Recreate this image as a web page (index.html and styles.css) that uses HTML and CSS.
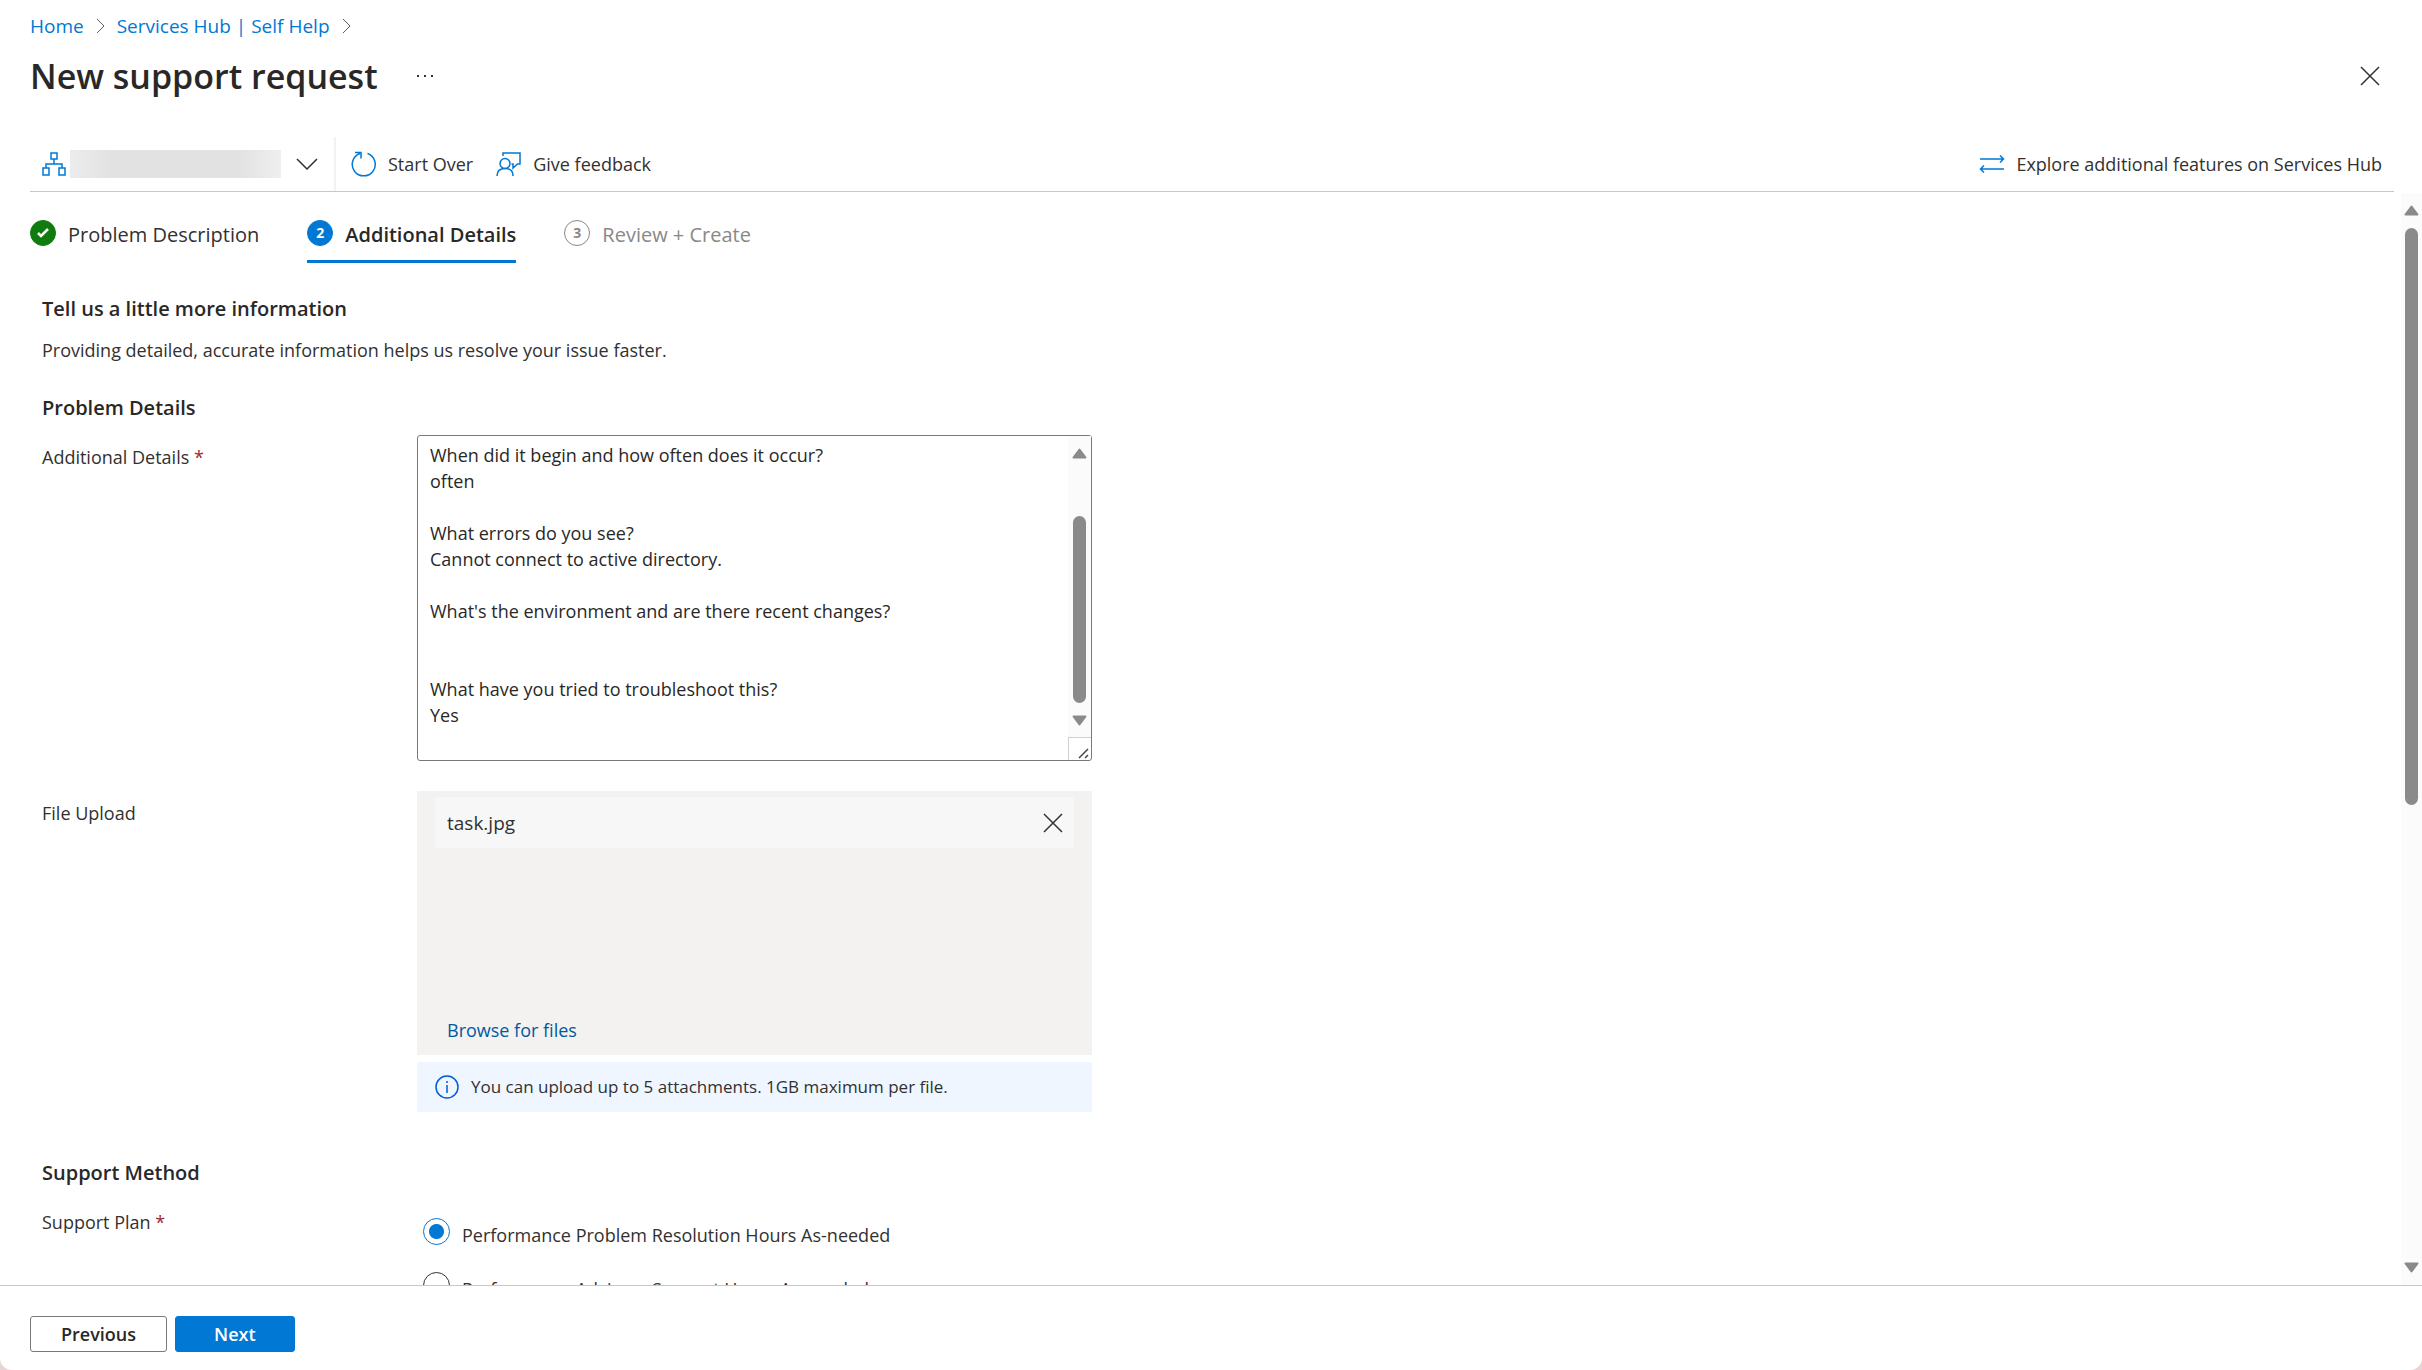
FILE: index.html
```html
<!DOCTYPE html>
<html lang="en">
<head>
  <meta charset="UTF-8">
  <meta name="viewport" content="width=device-width, initial-scale=1.0">
  <title>New support request</title>
  <link rel="stylesheet" href="styles.css">
</head>
<body>
  <div class="window">
    <header class="page-header">
      <nav class="breadcrumb" aria-label="Breadcrumb">
        <a href="#">Home</a>
        <svg class="crumb-sep" viewBox="0 0 9 16"><path d="M1 1l7 7-7 7"/></svg>
        <a href="#">Services Hub | Self Help</a>
        <svg class="crumb-sep" viewBox="0 0 9 16"><path d="M1 1l7 7-7 7"/></svg>
      </nav>
      <div class="title-row">
        <h1>New support request</h1>
        <button class="icon-btn more" aria-label="More">
          <svg width="18" height="4" viewBox="0 0 18 4"><path d="M1 1h2v2H1zM8 1h2v2H8zM15 1h2v2h-2z"/></svg>
        </button>
        <button class="icon-btn close" aria-label="Close">
          <svg class="stroke-dark" width="20" height="20" viewBox="0 0 20 20"><path d="M1 1l18 18M19 1L1 19"/></svg>
        </button>
      </div>
      <div class="toolbar">
        <button class="tool-btn account" aria-label="Switch account">
          <svg class="stroke-blue" width="24" height="24" viewBox="0 0 24 24"><path d="M9 1h6v6H9zM1 16h6v7H1zM17 16h6v7h-6zM12 7v5M4 16v-4h16v4"/></svg>
          <span class="account-name"></span>
          <svg class="stroke-dark" width="22" height="12" viewBox="0 0 22 12"><path d="M1 1l10 10L21 1"/></svg>
        </button>
        <button class="tool-btn">
          <svg class="stroke-blue" width="26" height="26" viewBox="0 0 26 26"><path d="M16.500 2.500A11.500 11.500 0 1 1 9 2.500M4 1.500h6v6"/></svg>
          Start Over
        </button>
        <button class="tool-btn">
          <svg class="stroke-blue" width="26" height="26" viewBox="0 0 26 26"><path d="M7 5V2h17v11h-2.500l-4.500 4v-4h-1.500"/><circle cx="9" cy="12.500" r="5"/><path d="M1 25c0-5 3-7.500 8-7.500s8 2.500 8 7.500"/></svg>
          Give feedback
        </button>
        <button class="tool-btn explore">
          <svg class="stroke-blue" width="26" height="20" viewBox="0 0 26 20"><path d="M1 5h23M21 1.500l3.500 3.500L21 8.500M25 15H2M5 11.500L1.500 15 5 18.500"/></svg>
          Explore additional features on Services Hub
        </button>
      </div>
    </header>

    <main class="content">
      <div class="scroll-area">
        <div class="tabs" role="tablist">
          <button class="tab" role="tab">
            <span class="badge done"><svg width="12" height="10" viewBox="0 0 12 10"><path d="M1 5l3 3 7-7"/></svg></span>
            Problem Description
          </button>
          <button class="tab active" role="tab" aria-selected="true">
            <span class="badge">2</span>
            Additional Details
          </button>
          <button class="tab pending" role="tab">
            <span class="badge">3</span>
            Review + Create
          </button>
        </div>

        <form class="form">
          <h2>Tell us a little more information</h2>
          <p class="intro">Providing detailed, accurate information helps us resolve your issue faster.</p>

          <h2>Problem Details</h2>
          <div class="row">
            <label class="label" for="details">Additional Details <span class="required">*</span></label>
            <div class="details-box">
              <textarea id="details">When did it begin and how often does it occur?
often

What errors do you see?
Cannot connect to active directory.

What's the environment and are there recent changes?


What have you tried to troubleshoot this?
Yes</textarea>
              <div class="textarea-side">
                <div class="scrollbar">
                  <svg class="arrow" viewBox="0 0 15 11"><path d="M7.500 1.500L13.500 9.500h-12z"/></svg>
                  <span class="thumb"></span>
                  <svg class="arrow" viewBox="0 0 15 11"><path d="M7.500 9.500L1.500 1.500h12z"/></svg>
                </div>
                <svg class="grip" viewBox="0 0 22 22"><path d="M10 20l9-9M16 20l3-3"/></svg>
              </div>
            </div>
          </div>

          <div class="row">
            <label class="label" for="file">File Upload</label>
            <div class="upload">
              <div class="drop-zone">
                <div class="file">
                  <span>task.jpg</span>
                  <button type="button" class="icon-btn" aria-label="Remove task.jpg">
                    <svg class="stroke-dark" width="20" height="20" viewBox="0 0 20 20"><path d="M1 1l18 18M19 1L1 19"/></svg>
                  </button>
                </div>
                <label class="browse" for="file">Browse for files</label>
                <input type="file" id="file" hidden>
              </div>
              <div class="notice">
                <svg width="24" height="24" viewBox="0 0 24 24"><circle cx="12" cy="12" r="11"/><path d="M12 10v8M12 6v2"/></svg>
                You can upload up to 5 attachments. 1GB maximum per file.
              </div>
            </div>
          </div>

          <h2 class="support-title">Support Method</h2>
          <div class="row">
            <span class="label" id="plan-label">Support Plan <span class="required">*</span></span>
            <div class="options" role="radiogroup" aria-labelledby="plan-label">
              <label class="option"><input type="radio" name="plan" checked><span>Performance Problem Resolution Hours As-needed</span></label>
              <label class="option"><input type="radio" name="plan"><span>Performance Advisory Support Hours As-needed</span></label>
            </div>
          </div>
        </form>
      </div>
      <div class="scrollbar page-scrollbar">
        <svg class="arrow" viewBox="0 0 15 11"><path d="M7.500 1.500L13.500 9.500h-12z"/></svg>
        <span class="thumb"></span>
        <svg class="arrow" viewBox="0 0 15 11"><path d="M7.500 9.500L1.500 1.500h12z"/></svg>
      </div>
    </main>

    <footer class="footer">
      <button class="btn">Previous</button>
      <button class="btn primary">Next</button>
    </footer>
  </div>
</body>
</html>
```

FILE: styles.css
```css
:root {
  --blue: #0078d4;
  --text: #323130;
  --dark: #292827;
  --line: #c8c8c8;
  --thumb: #8a8a8a;
}
* { box-sizing: border-box; margin: 0; padding: 0; }
html, body { height: 100%; }
body {
  background: #e6d4d6;
  color: var(--text);
  font-family: 'Segoe UI', 'Open Sans', 'Noto Sans', sans-serif;
  font-size: 18px;
  line-height: 26px;
}
button, textarea, input { font: inherit; color: inherit; }
button { background: none; border: none; cursor: pointer; }
svg { flex: none; fill: none; }
a { color: var(--blue); text-decoration: none; }
.stroke-blue { stroke: var(--blue); stroke-width: 1.5; }
.stroke-dark { stroke: var(--text); stroke-width: 1.5; }

.window {
  display: flex;
  flex-direction: column;
  height: 100vh;
  background: #fff;
  border-radius: 0 0 12px 12px;
  overflow: hidden;
}

/* header */
.page-header { padding: 13px 28px 0 30px; }
.breadcrumb { display: flex; align-items: center; gap: 12px; font-size: 19px; }
.crumb-sep { width: 9px; height: 16px; stroke: #605e5c; }
.title-row {
  display: flex;
  align-items: center;
  height: 48px;
  margin: 13px 0 37px;
}
h1 { font-size: 34px; font-weight: 600; line-height: 48px; color: var(--dark); }
.icon-btn { display: flex; align-items: center; justify-content: center; }
.more { margin-left: 38px; }
.more svg { fill: var(--text); }
.close { margin-left: auto; margin-right: 14px; }

.toolbar {
  display: flex;
  align-items: center;
  gap: 23px;
  height: 55px;
  border-bottom: 1px solid var(--line);
}
.tool-btn { display: flex; align-items: center; gap: 11px; }
.account {
  gap: 4px;
  height: 54px;
  padding: 0 16px 0 12px;
  border-right: 2px solid #f3f2f1;
  margin-right: -8px;
}
.account-name {
  width: 211px;
  height: 28px;
  margin-right: 11px;
  background: linear-gradient(90deg, #ececec, #e2e2e2 20%, #e2e2e2 80%, #efefef);
}
.explore { margin-left: auto; padding-right: 12px; }

/* content */
.content { flex: 1; display: flex; min-height: 0; padding-top: 1px; }
.scroll-area { flex: 1; overflow: hidden; }
.tabs { display: flex; gap: 48px; padding: 16px 30px 0; }
.tab {
  display: flex;
  align-items: center;
  gap: 12px;
  height: 54px;
  border-bottom: 3px solid transparent;
  font-size: 20px;
}
.tab.active { border-color: var(--blue); font-weight: 600; color: var(--dark); }
.tab.pending { color: #8a8886; }
.badge {
  display: flex;
  align-items: center;
  justify-content: center;
  width: 26px;
  height: 26px;
  margin-bottom: 4px;
  border: 1px solid var(--blue);
  border-radius: 50%;
  background: var(--blue);
  color: #fff;
  font-size: 14px;
  font-weight: 700;
  line-height: 24px;
}
.badge.done { background: #107c10; border-color: #107c10; }
.badge svg { stroke: #fff; stroke-width: 2.5; }
.pending .badge { background: #fff; color: #8a8886; border-color: #8a8886; }

.form { max-width: 1140px; padding: 33px 42px 0; }
h2 { font-size: 20px; font-weight: 600; line-height: 26px; color: var(--dark); }
.intro { margin: 15px 0 32px; }
.row {
  display: grid;
  grid-template-columns: 375px minmax(0, 675px);
  margin: 14px 0 30px;
}
.label { padding-top: 9px; }
.required { color: #a4262c; }

.details-box {
  display: flex;
  height: 326px;
  border: 1px solid #7a7979;
  border-radius: 3px;
}
textarea {
  flex: 1;
  padding: 6px 12px;
  border: none;
  outline: none;
  resize: none;
  overflow: hidden;
  background: transparent;
  color: var(--dark);
}
.textarea-side { display: flex; flex-direction: column; width: 23px; }
.textarea-side .scrollbar { flex: 1; padding: 12px 0 11px; }
.grip {
  width: 23px;
  height: 23px;
  border-top: 1px solid #d2d0ce;
  border-left: 1px solid #d2d0ce;
  stroke: #484644;
  stroke-width: 1.5;
}

.scrollbar {
  display: flex;
  flex-direction: column;
  align-items: center;
  justify-content: space-between;
  background: #fbfbfb;
}
.arrow {
  width: 15px;
  height: 11px;
  fill: var(--thumb);
  stroke: var(--thumb);
  stroke-width: 2;
  stroke-linejoin: round;
}
.thumb { width: 13px; border-radius: 7px; background: var(--thumb); }
.textarea-side .thumb { height: 187px; margin-top: 44px; }
.page-scrollbar { width: 21px; padding: 12px 0; justify-content: flex-start; }
.page-scrollbar .thumb { height: 54%; margin: 12px 0 auto; }

.drop-zone {
  display: flex;
  flex-direction: column;
  height: 264px;
  padding: 6px 18px 12px;
  background: #f3f2f1;
}
.file {
  display: flex;
  align-items: center;
  justify-content: space-between;
  height: 51px;
  padding: 0 11px 0 12px;
  border-radius: 3px;
  background: #f7f7f7;
  font-size: 19px;
}
.browse { margin: auto auto 0 12px; color: #005a9e; cursor: pointer; }
.notice {
  display: flex;
  align-items: center;
  gap: 12px;
  height: 50px;
  margin-top: 7px;
  padding: 0 18px;
  background: #eff6ff;
  font-size: 17px;
}
.notice svg { stroke: #015cda; stroke-width: 1.5; }

.support-title { margin-top: 48px; }
.options { display: flex; flex-direction: column; gap: 27px; padding: 18px 6px; }
.option { display: flex; align-items: center; gap: 12px; height: 27px; }
.option span { padding-top: 6px; }
.option input {
  appearance: none;
  width: 27px;
  height: 27px;
  border: 1px solid var(--text);
  border-radius: 50%;
}
.option input:checked {
  border-color: var(--blue);
  background: radial-gradient(circle, var(--blue) 7px, transparent 8px);
}

/* footer */
.footer {
  display: flex;
  gap: 8px;
  padding: 30px 30px 18px;
  border-top: 1px solid var(--line);
}
.btn {
  height: 36px;
  padding: 0 30px;
  border: 1px solid #7a7979;
  border-radius: 3px;
  color: var(--dark);
  font-weight: 600;
  line-height: 34px;
}
.btn.primary { padding: 0 38px; background: var(--blue); border-color: var(--blue); color: #fff; }
```
